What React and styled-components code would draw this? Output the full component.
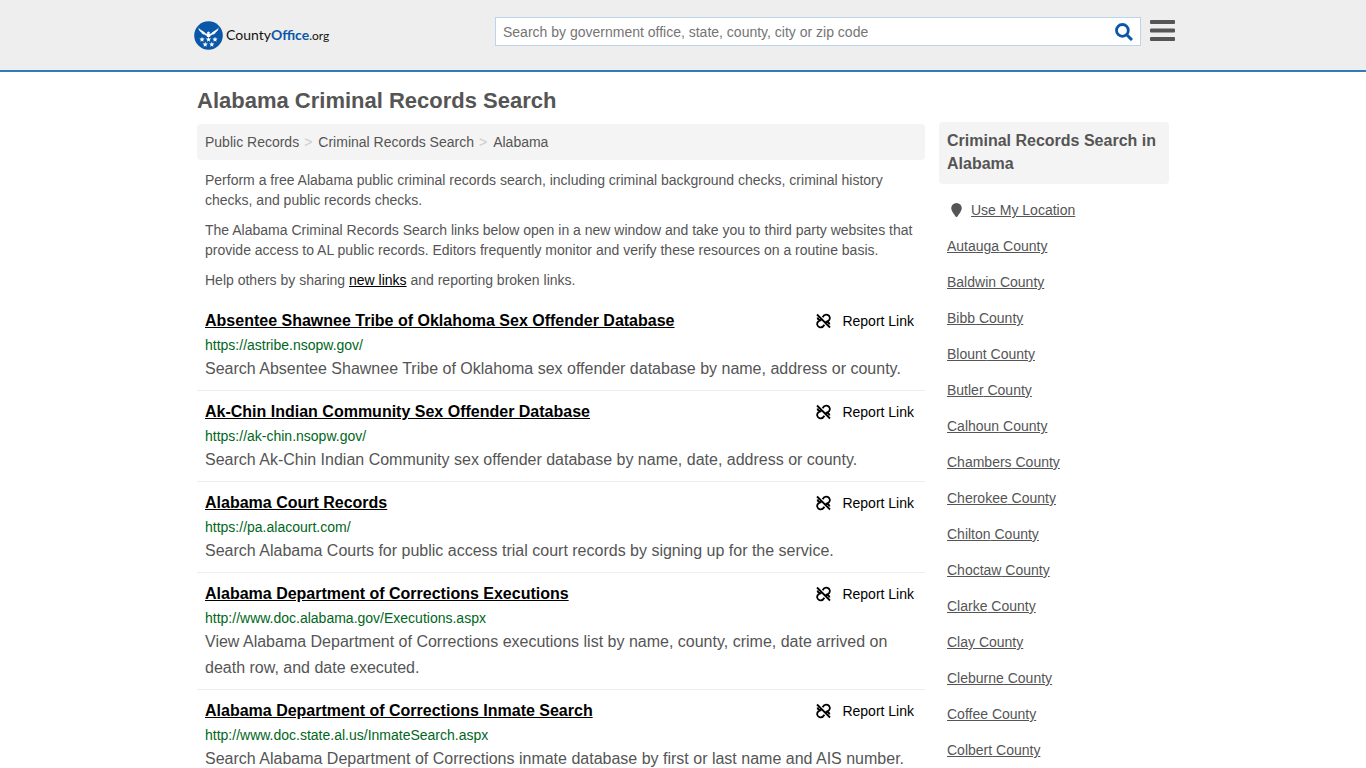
import React from 'react';
import styled, { createGlobalStyle } from 'styled-components';

const GlobalStyle = createGlobalStyle`
  * {
    box-sizing: border-box;
  }
  body {
    margin: 0;
    background: #fff;
    color: #555;
    font: 14px/20px "Liberation Sans", Arial, sans-serif;
  }
`;

const Header = styled.header`
  background: #eee;
  border-bottom: 2px solid #337ab7;
`;

const HeaderInner = styled.div`
  display: flex;
  align-items: flex-start;
  max-width: 984px;
  height: 70px;
  margin: 0 auto;
  padding: 17px 0 0 3px;
`;

const Logo = styled.a`
  display: flex;
  align-items: center;
  gap: 3px;
  margin-top: 3px;
  color: #111;
  font: 14px/29px Lato, sans-serif;
  text-decoration: none;
  b {
    color: #0a57a8;
  }
  small {
    font-size: 12px;
    font-weight: 400;
  }
`;

const SearchForm = styled.form`
  display: flex;
  align-items: center;
  flex: 0 1 646px;
  height: 29px;
  margin-left: auto;
  background: #fff;
  border: 1px solid #bcd5ea;
`;

const SearchInput = styled.input`
  flex: 1;
  min-width: 0;
  padding: 0 7px;
  border: 0;
  outline: none;
  background: none;
  font: 14px/20px "Liberation Sans", Arial, sans-serif;
  &::placeholder {
    color: #757575;
  }
`;

const IconButton = styled.button`
  display: flex;
  padding: 0;
  border: 0;
  background: none;
  cursor: pointer;
`;

const SearchButton = styled(IconButton)`
  margin-right: 7px;
`;

const MenuButton = styled(IconButton)`
  margin: 3px 0 0 9px;
`;

const Page = styled.div`
  max-width: 972px;
  margin: 0 auto;
`;

const PageTitle = styled.h1`
  margin: 0;
  padding: 17px 0 9px;
  font-size: 22px;
  line-height: 24px;
`;

const Columns = styled.div`
  display: flex;
  align-items: flex-start;
  gap: 14px;
`;

const Main = styled.main`
  flex: 1;
  min-width: 0;
  padding-top: 2px;
`;

const Breadcrumb = styled.nav`
  margin-bottom: 10px;
  padding: 8px;
  background: #f4f4f4;
  border-radius: 4px;
  a {
    color: #555;
    text-decoration: none;
  }
  span {
    padding: 0 6px 0 5px;
    color: #ccc;
  }
`;

const Text = styled.p`
  margin: 0 0 10px;
  padding: 0 8px;
  a {
    color: #000;
  }
`;

const Results = styled.ul`
  margin: 0;
  padding: 0;
  list-style: none;
`;

const Result = styled.li`
  padding: 11px 8px 8px;
  border-bottom: 1px solid #eee;
`;

const ResultHead = styled.div`
  display: flex;
  justify-content: space-between;
  margin-bottom: 4px;
  padding-right: 3px;
`;

const ResultTitle = styled.a`
  color: #000;
  font-size: 16px;
  font-weight: bold;
`;

const ReportLink = styled.a`
  display: flex;
  align-items: center;
  gap: 11px;
  color: #000;
  text-decoration: none;
`;

const Url = styled.div`
  color: #006621;
`;

const Description = styled.div`
  margin-top: 1px;
  font-size: 16px;
  line-height: 26px;
`;

const Sidebar = styled.aside`
  flex: 0 0 230px;
`;

const SidebarTitle = styled.h2`
  margin: 0 0 8px;
  padding: 7px 8px 9px;
  background: #f4f4f4;
  border-radius: 4px;
  font-size: 16px;
  line-height: 23px;
`;

const SidebarLink = styled.a`
  display: flex;
  align-items: center;
  gap: 9px;
  padding: 8px;
  color: #555;
`;

const LocationLink = styled(SidebarLink)`
  padding-left: 12px;
`;

const results = [
  {
    title: 'Absentee Shawnee Tribe of Oklahoma Sex Offender Database',
    url: 'https://astribe.nsopw.gov/',
    description: 'Search Absentee Shawnee Tribe of Oklahoma sex offender database by name, address or county.',
  },
  {
    title: 'Ak-Chin Indian Community Sex Offender Database',
    url: 'https://ak-chin.nsopw.gov/',
    description: 'Search Ak-Chin Indian Community sex offender database by name, date, address or county.',
  },
  {
    title: 'Alabama Court Records',
    url: 'https://pa.alacourt.com/',
    description: 'Search Alabama Courts for public access trial court records by signing up for the service.',
  },
  {
    title: 'Alabama Department of Corrections Executions',
    url: 'http://www.doc.alabama.gov/Executions.aspx',
    description: 'View Alabama Department of Corrections executions list by name, county, crime, date arrived on death row, and date executed.',
  },
  {
    title: 'Alabama Department of Corrections Inmate Search',
    url: 'http://www.doc.state.al.us/InmateSearch.aspx',
    description: 'Search Alabama Department of Corrections inmate database by first or last name and AIS number.',
  },
];

const counties = [
  'Autauga', 'Baldwin', 'Bibb', 'Blount', 'Butler', 'Calhoun', 'Chambers', 'Cherokee',
  'Chilton', 'Choctaw', 'Clarke', 'Clay', 'Cleburne', 'Coffee', 'Colbert',
];

const STAR = 'M0-2.8 .7-.9 2.7-.9 1.1 .4 1.7 2.3 0 1.2-1.7 2.3-1.1 .4-2.7-.9-.7-.9Z';
const STARS = [[8, 18.5], [14.5, 18.5], [21, 18.5], [11.2, 23.5], [17.8, 23.5]];

const LogoMark = () => (
  <svg width="29" height="29" viewBox="0 0 29 29" aria-hidden="true">
    <circle cx="14.5" cy="14.5" r="14.3" fill="#0a57a8" />
    <g fill="#fff">
      <path d="M4.5 6.5C6 9.3 9.5 9.5 11.8 12.6L13.3 13 13 11.5 14.3 10.5 15.9 11.2 15.3 13 17.2 12.6C19.5 9.5 23 9.3 24.5 6.5 24.5 9 23.2 10.6 21.8 11.2 21.2 12.6 19.8 13.4 18.5 13.6 17.5 14.6 16.6 14.8 15.7 14.8L16.5 16H12.5L13.3 14.8C12.4 14.8 11.5 14.6 10.5 13.6 9.2 13.4 7.8 12.6 7.2 11.2 5.8 10.6 4.5 9 4.5 6.5Z" />
      {STARS.map(([x, y]) => (
        <path key={`${x}-${y}`} d={STAR} transform={`translate(${x} ${y})`} />
      ))}
    </g>
  </svg>
);

const SearchIcon = () => (
  <svg width="18" height="18" viewBox="0 0 18 18" fill="none" stroke="#0a57a8" aria-hidden="true">
    <circle cx="7.4" cy="7.4" r="5.9" strokeWidth="2.8" />
    <path d="m11.5 11.5 5.5 5.5" strokeWidth="3" />
  </svg>
);

const MenuIcon = () => (
  <svg width="25" height="21" viewBox="0 0 25 21" fill="#555" aria-hidden="true">
    <rect width="25" height="4" rx="1" />
    <rect y="8.5" width="25" height="4" rx="1" />
    <rect y="17" width="25" height="4" rx="1" />
  </svg>
);

const UnlinkIcon = () => (
  <svg width="15" height="16" viewBox="0 0 15 16" fill="none" stroke="#000" strokeWidth="1.8" aria-hidden="true">
    <path d="M1 1.5l13 13" />
    <path d="M6.6 4.2C8 1.6 10 1.3 11.6 1.9c2.200.8 2.900 3.400 1.500 5.200-.9 1.100-2 1.700-3.600 1.900 1.900-.3 3.600.500 4 2.500" />
    <path d="M8.400 11.800C7 14.400 5 14.700 3.400 14.100c-2.200-.8-2.900-3.400-1.500-5.200.9-1.100 2-1.700 3.600-1.900C3.600 7.300 1.900 6.500 1.500 4.500" />
  </svg>
);

const PinIcon = () => (
  <svg width="11" height="14" viewBox="0 0 11 14" fill="#555" aria-hidden="true">
    <path d="M5.5 0A5.3 5.3 0 0 0 .2 5.3C.2 8 3 11 4.6 13.5q.9 1 1.8 0C8 11 10.8 8 10.8 5.3A5.3 5.3 0 0 0 5.5 0Z" />
  </svg>
);

const App = () => (
  <>
    <GlobalStyle />
    <Header>
      <HeaderInner>
        <Logo href="#">
          <LogoMark />
          <span>County<b>Office</b><small>.org</small></span>
        </Logo>
        <SearchForm>
          <SearchInput
            type="text"
            aria-label="Search"
            placeholder="Search by government office, state, county, city or zip code"
          />
          <SearchButton type="submit" aria-label="Submit search">
            <SearchIcon />
          </SearchButton>
        </SearchForm>
        <MenuButton type="button" aria-label="Menu">
          <MenuIcon />
        </MenuButton>
      </HeaderInner>
    </Header>
    <Page>
      <PageTitle>Alabama Criminal Records Search</PageTitle>
      <Columns>
        <Main>
          <Breadcrumb>
            <a href="#">Public Records</a>
            <span>&gt;</span>
            <a href="#">Criminal Records Search</a>
            <span>&gt;</span>
            <a href="#">Alabama</a>
          </Breadcrumb>
          <Text>
            Perform a free Alabama public criminal records search, including criminal background checks, criminal history checks, and public records checks.
          </Text>
          <Text>
            The Alabama Criminal Records Search links below open in a new window and take you to third party websites that provide access to AL public records. Editors frequently monitor and verify these resources on a routine basis.
          </Text>
          <Text>
            Help others by sharing <a href="#">new links</a> and reporting broken links.
          </Text>
          <Results>
            {results.map((item) => (
              <Result key={item.title}>
                <ResultHead>
                  <ResultTitle href="#">{item.title}</ResultTitle>
                  <ReportLink href="#">
                    <UnlinkIcon />
                    Report Link
                  </ReportLink>
                </ResultHead>
                <Url>{item.url}</Url>
                <Description>{item.description}</Description>
              </Result>
            ))}
          </Results>
        </Main>
        <Sidebar>
          <SidebarTitle>Criminal Records Search in Alabama</SidebarTitle>
          <LocationLink href="#">
            <PinIcon />
            Use My Location
          </LocationLink>
          {counties.map((county) => (
            <SidebarLink href="#" key={county}>{county} County</SidebarLink>
          ))}
        </Sidebar>
      </Columns>
    </Page>
  </>
);

export default App;
